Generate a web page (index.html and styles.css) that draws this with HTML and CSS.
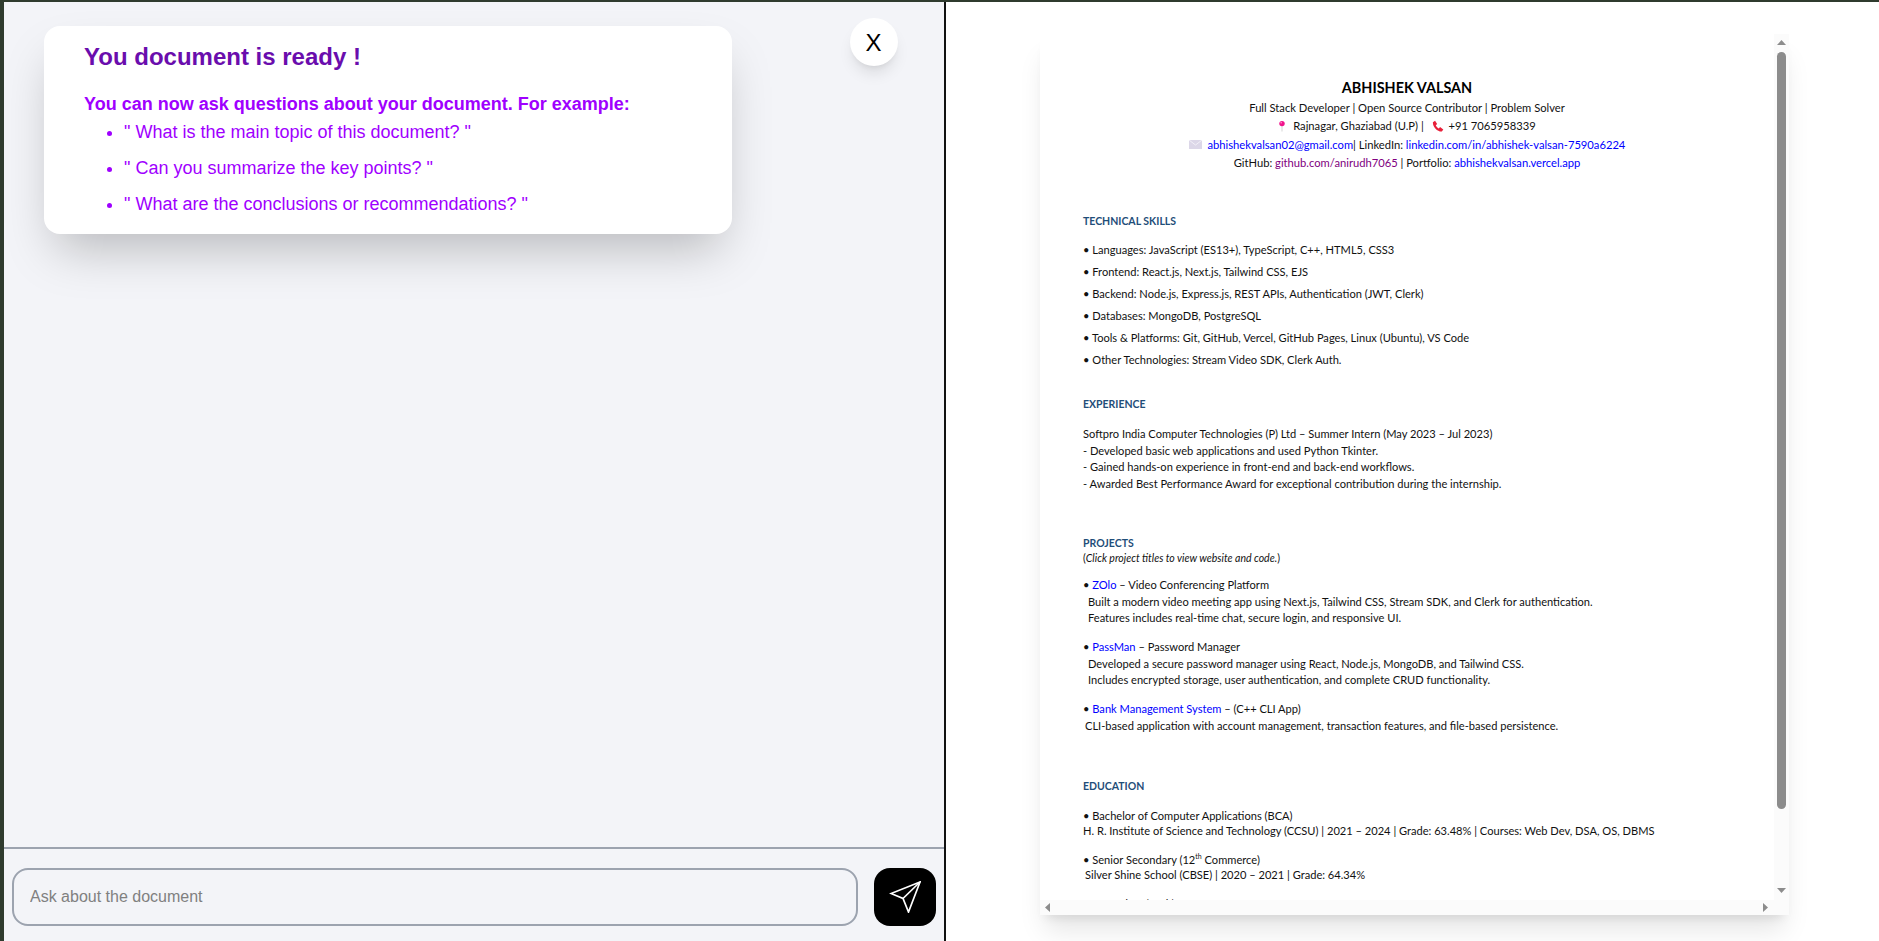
FILE: index.html
```html
<!DOCTYPE html>
<html lang="en">
<head>
<meta charset="utf-8">
<title>Document chat</title>
<link rel="stylesheet" href="styles.css">
</head>
<body>
<main class="app">
  <section class="chat">
    <div class="chat-area">
      <article class="card">
        <h1 class="card-title">You document is ready !</h1>
        <p class="card-sub">You can now ask questions about your document. For example:</p>
        <ul class="card-list">
          <li>" What is the main topic of this document? "</li>
          <li>" Can you summarize the key points? "</li>
          <li>" What are the conclusions or recommendations? "</li>
        </ul>
      </article>
      <button class="close" type="button">X</button>
    </div>
    <form class="composer">
      <input class="ask" type="text" placeholder="Ask about the document">
      <button class="send" type="button" aria-label="Send">
        <svg class="send-icon" viewBox="0 0 32 32" fill="none" stroke="#fff" stroke-width="1.7" stroke-linejoin="miter">
          <path d="M31 1 2 12.5 14 17.5 19.5 31Z"/>
          <path d="M31 1 14 17.5"/>
        </svg>
      </button>
    </form>
  </section>
  <section class="viewer">
    <div class="pdf">
      <div class="doc-clip">
        <div class="doc">
          <header class="doc-head">
            <div class="name">ABHISHEK VALSAN</div>
            <div class="hl">Full Stack Developer | Open Source Contributor | Problem Solver</div>
            <div class="hl">
              <svg class="ico pin" viewBox="0 0 10 14"><path d="M5 6v8" stroke="#d9d9d9" stroke-width="1.4"/><circle cx="5" cy="4" r="3.4" fill="#f0148c"/><circle cx="4" cy="3" r="1" fill="#ff9ad0"/></svg>
              Rajnagar, Ghaziabad (U.P) | <svg class="ico phone" viewBox="0 0 14 14"><path d="M1 2.5 3.6 .8 6 4.6 4.4 6c.6 1.500 2 3 3.600 3.800L9.400 8.300 13.200 11l-1.700 2.500C6.500 13.800.800 8 1 2.500Z" fill="#e8213a"/></svg> +91 7065958339
            </div>
            <div class="hl">
              <svg class="ico mail" viewBox="0 0 13 9"><rect width="13" height="9" fill="#dcd7e8"/><path d="M0 0 6.500 5 13 0" fill="none" stroke="#f2f0f7" stroke-width="1"/></svg>
              <a class="lnk">abhishekvalsan02@gmail.com</a>| LinkedIn: <a class="lnk">linkedin.com/in/abhishek-valsan-7590a6224</a>
            </div>
            <div class="hl">GitHub: <a class="vis">github.com/anirudh7065</a> | Portfolio: <a class="lnk">abhishekvalsan.vercel.app</a></div>
          </header>

          <section class="sec">
            <h2 class="sec-title">TECHNICAL SKILLS</h2>
            <ul class="skills">
              <li>• Languages: JavaScript (ES13+), TypeScript, C++, HTML5, CSS3</li>
              <li>• Frontend: React.js, Next.js, Tailwind CSS, EJS</li>
              <li>• Backend: Node.js, Express.js, REST APIs, Authentication (JWT, Clerk)</li>
              <li>• Databases: MongoDB, PostgreSQL</li>
              <li>• Tools &amp; Platforms: Git, GitHub, Vercel, GitHub Pages, Linux (Ubuntu), VS Code</li>
              <li>• Other Technologies: Stream Video SDK, Clerk Auth.</li>
            </ul>
          </section>

          <section class="sec sec-near">
            <h2 class="sec-title">EXPERIENCE</h2>
            <div class="grp">
              <div>Softpro India Computer Technologies (P) Ltd – Summer Intern (May 2023 – Jul 2023)</div>
              <div>- Developed basic web applications and used Python Tkinter.</div>
              <div>- Gained hands-on experience in front-end and back-end workflows.</div>
              <div>- Awarded Best Performance Award for exceptional contribution during the internship.</div>
            </div>
          </section>

          <section class="sec">
            <h2 class="sec-title">PROJECTS</h2>
            <div class="note">(<em>Click project titles to view website and code.</em>)</div>
            <div class="grp">
              <div>• <a class="lnk">ZOlo</a> – Video Conferencing Platform</div>
              <div class="in2">Built a modern video meeting app using Next.js, Tailwind CSS, Stream SDK, and Clerk for authentication.</div>
              <div class="in2">Features includes real-time chat, secure login, and responsive UI.</div>
            </div>
            <div class="grp">
              <div>• <a class="lnk">PassMan</a> – Password Manager</div>
              <div class="in2">Developed a secure password manager using React, Node.js, MongoDB, and Tailwind CSS.</div>
              <div class="in2">Includes encrypted storage, user authentication, and complete CRUD functionality.</div>
            </div>
            <div class="grp">
              <div>• <a class="lnk">Bank Management System</a> – (C++ CLI App)</div>
              <div class="in1">CLI-based application with account management, transaction features, and file-based persistence.</div>
            </div>
          </section>

          <section class="sec sec-far">
            <h2 class="sec-title">EDUCATION</h2>
            <div class="grp tight">
              <div>• Bachelor of Computer Applications (BCA)</div>
              <div>H. R. Institute of Science and Technology (CCSU) | 2021 – 2024 | Grade: 63.48% | Courses: Web Dev, DSA, OS, DBMS</div>
            </div>
            <div class="grp tight">
              <div>• Senior Secondary (12<sup class="th">th</sup> Commerce)</div>
              <div class="in1">Silver Shine School (CBSE) | 2020 – 2021 | Grade: 64.34%</div>
            </div>
            <div class="grp tight">
              <div>• Secondary (10th)</div>
            </div>
          </section>
        </div>
      </div>

      <div class="vbar">
        <svg class="arrow" viewBox="0 0 9 5"><path d="M4.500 0 9 5H0Z"/></svg>
        <div class="thumb"></div>
        <svg class="arrow" viewBox="0 0 9 5"><path d="M0 0H9L4.500 5Z"/></svg>
      </div>
      <div class="hbar">
        <svg class="arrow-h" viewBox="0 0 5 9"><path d="M5 0V9L0 4.500Z"/></svg>
        <svg class="arrow-h" viewBox="0 0 5 9"><path d="M0 0 5 4.500 0 9Z"/></svg>
      </div>
      <div class="corner"></div>
    </div>
  </section>
</main>
</body>
</html>
```
FILE: styles.css
```css
* { box-sizing: border-box; }

html, body { height: 100%; }

body {
  margin: 0;
  padding: 2px 0 0 4px;
  background: #2f3b2e;
  overflow: hidden;
  font-family: "Liberation Sans", Arial, sans-serif;
}

.app {
  display: flex;
  height: 939px;
}

/* left pane */
.chat {
  width: 942px;
  flex: none;
  display: flex;
  flex-direction: column;
  background: #f3f4f8;
  border-right: 2px solid #111;
}

.chat-area {
  flex: 1;
  display: flex;
  align-items: flex-start;
  padding: 16px 0 0 40px;
}

.card {
  width: 688px;
  height: 208px;
  margin-top: 8px;
  padding: 15px 40px 16px;
  background: #fff;
  border-radius: 16px;
  box-shadow: 0 25px 50px -12px rgba(0, 0, 0, .25);
}

.card-title {
  margin: 0;
  font-size: 24px;
  line-height: 32px;
  font-weight: 700;
  color: #6a0dad;
}

.card-sub {
  margin: 19px 0 2px;
  font-size: 18px;
  line-height: 24px;
  font-weight: 700;
  color: #9f00ff;
}

.card-list {
  margin: 0;
  padding: 0 0 0 40px;
  color: #9f00ff;
  font-size: 18px;
  line-height: 28px;
}

.card-list li + li { margin-top: 8px; }

.close {
  width: 48px;
  height: 48px;
  margin-left: 118px;
  padding: 2px 1px 0 0;
  border: 0;
  border-radius: 50%;
  background: #fff;
  color: #000;
  font: 24px/46px "Liberation Sans", Arial, sans-serif;
  box-shadow: 0 10px 15px -3px rgba(0, 0, 0, .1), 0 4px 6px -4px rgba(0, 0, 0, .1);
}

.composer {
  display: flex;
  gap: 16px;
  height: 94px;
  padding: 19px 8px 15px 8px;
  border-top: 2px solid #9ca3af;
}

.ask {
  flex: 1;
  min-width: 0;
  padding: 0 16px;
  border: 2px solid #9ca3af;
  border-radius: 16px;
  background: transparent;
  font: 16px "Liberation Sans", Arial, sans-serif;
  outline: none;
}

.ask::placeholder { color: #808080; opacity: 1; }

.send {
  width: 62px;
  flex: none;
  display: flex;
  align-items: center;
  justify-content: center;
  padding: 0;
  border: 0;
  border-radius: 16px;
  background: #000;
}

.send-icon { width: 32px; height: 32px; }

/* right pane */
.viewer {
  flex: 1;
  min-width: 0;
  padding: 32px 90px 26px 94px;
  background: #fff;
}

.pdf {
  height: 100%;
  display: grid;
  grid-template-columns: 1fr 15px;
  grid-template-rows: 1fr 15px;
  background: #fff;
  box-shadow: 0 20px 25px -5px rgba(0, 0, 0, .1), 0 8px 10px -6px rgba(0, 0, 0, .1);
}

.doc-clip { overflow: hidden; min-height: 0; }

.doc {
  padding: 44px 0 0 43px;
  font-family: Lato, "Liberation Sans", sans-serif;
  font-size: 11.1px;
  line-height: 16.7px;
  color: #111;
}

.doc-head {
  height: 93px;
  margin-left: -43px;
  text-align: center;
}

.name {
  font-size: 14.4px;
  line-height: 20px;
  font-weight: 700;
  color: #000;
  margin-bottom: 1px;
}

.hl {
  height: 18.4px;
  font-size: 11.2px;
  line-height: 18.4px;
}

.lnk { color: #0000ff; }
.vis { color: #800080; }

.ico { display: inline-block; vertical-align: -2px; }
.pin { width: 8px; height: 12px; margin-right: 4px; }
.phone { width: 12px; height: 12px; margin: 0 2px 0 5px; }
.mail { width: 13px; height: 9px; margin-right: 3px; vertical-align: 0; }

.sec { margin-top: 41px; }
.sec-near { margin-top: 24px; }
.sec-far { margin-top: 43px; }

.sec-title {
  margin: 0;
  font-size: 10.5px;
  line-height: 18px;
  font-weight: 700;
  color: #1f4e79;
}

.skills {
  margin: 9px 0 0;
  padding: 0;
  list-style: none;
  line-height: 22px;
}

.grp { margin-top: 13px; }
.grp + .grp { margin-top: 12px; }
.grp.tight { margin-top: 13px; line-height: 15px; }
.grp.tight + .grp.tight { margin-top: 14px; }

.note {
  font-size: 10.5px;
  line-height: 12px;
}

.in1 { padding-left: 2px; }
.in2 { padding-left: 5px; }

.th { font-size: 7px; line-height: 0; }

/* scrollbars */
.vbar {
  grid-row: 1;
  grid-column: 2;
  display: flex;
  flex-direction: column;
  align-items: center;
  padding: 6px 0 7px;
  background: #fbfbfb;
}

.arrow { width: 9px; height: 5px; flex: none; fill: #8c8c8c; }

.thumb {
  width: 9px;
  height: 757px;
  margin: 7px 0 auto;
  border-radius: 5px;
  background: #8c8c8c;
}

.hbar {
  grid-row: 2;
  grid-column: 1;
  display: flex;
  align-items: center;
  justify-content: space-between;
  padding: 0 6px 0 5px;
  background: #fbfbfb;
}

.arrow-h { width: 5px; height: 9px; fill: #8c8c8c; }

.corner { background: #fbfbfb; }
```
